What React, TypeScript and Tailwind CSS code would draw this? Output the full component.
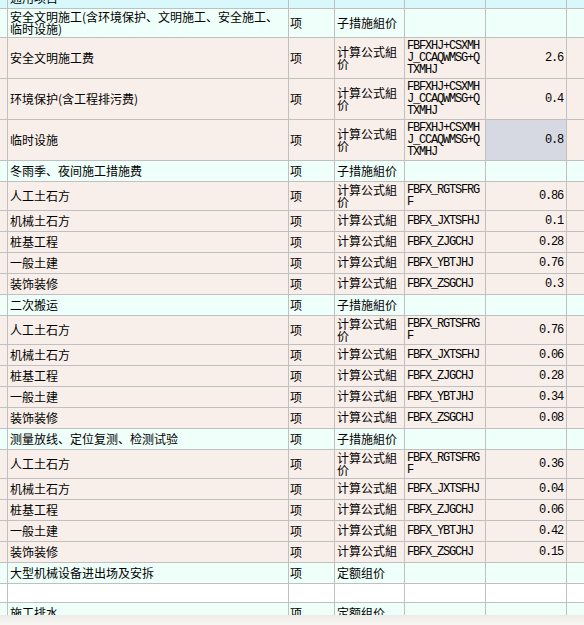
import React from "react";

type Kind = "head" | "group" | "item" | "blank";

type Row = {
  kind: Kind;
  name?: string;
  unit?: string;
  method?: string;
  formula?: string;
  value?: string;
  h: number;
  selected?: boolean;
};

const calc = "计算公式組价";

const subItems = (vals: string[]): Row[] => [
  { kind: "item", name: "人工土石方", unit: "项", method: calc, formula: "FBFX_RGTSFRGF", value: vals[0], h: 29 },
  { kind: "item", name: "机械土石方", unit: "项", method: calc, formula: "FBFX_JXTSFHJ", value: vals[1], h: 21 },
  { kind: "item", name: "桩基工程", unit: "项", method: calc, formula: "FBFX_ZJGCHJ", value: vals[2], h: 21 },
  { kind: "item", name: "一般土建", unit: "项", method: calc, formula: "FBFX_YBTJHJ", value: vals[3], h: 21 },
  { kind: "item", name: "装饰装修", unit: "项", method: calc, formula: "FBFX_ZSGCHJ", value: vals[4], h: 21 },
];

const rows: Row[] = [
  { kind: "head", name: "通用项目", h: 21 },
  { kind: "group", name: "安全文明施工(含环境保护、文明施工、安全施工、临时设施)", unit: "项", method: "子措施組价", h: 29 },
  { kind: "item", name: "安全文明施工费", unit: "项", method: calc, formula: "FBFXHJ+CSXMHJ_CCAQWMSG+QTXMHJ", value: "2.6", h: 41 },
  { kind: "item", name: "环境保护(含工程排污费)", unit: "项", method: calc, formula: "FBFXHJ+CSXMHJ_CCAQWMSG+QTXMHJ", value: "0.4", h: 41 },
  { kind: "item", name: "临时设施", unit: "项", method: calc, formula: "FBFXHJ+CSXMHJ_CCAQWMSG+QTXMHJ", value: "0.8", h: 41, selected: true },
  { kind: "group", name: "冬雨季、夜间施工措施费", unit: "项", method: "子措施組价", h: 21 },
  ...subItems(["0.86", "0.1", "0.28", "0.76", "0.3"]),
  { kind: "group", name: "二次搬运", unit: "项", method: "子措施組价", h: 21 },
  ...subItems(["0.76", "0.06", "0.28", "0.34", "0.08"]),
  { kind: "group", name: "测量放线、定位复测、检测试验", unit: "项", method: "子措施組价", h: 21 },
  ...subItems(["0.36", "0.04", "0.06", "0.42", "0.15"]),
  { kind: "group", name: "大型机械设备进出场及安拆", unit: "项", method: "定额组价", h: 21 },
  { kind: "blank", h: 19 },
  { kind: "group", name: "施工排水", unit: "项", method: "定额组价", h: 21 },
];

const rowBg: Record<Kind, string> = {
  head: "bg-[#d9f8fc]",
  group: "bg-[#effffa]",
  item: "bg-[#f9efea]",
  blank: "bg-white",
};

const cell = "border-r border-[#c0c0c0] overflow-hidden flex";
const mono = "font-['Liberation_Mono',monospace] text-[12px] tracking-[-1.2px]";

function GridRow({ row }: { row: Row }) {
  // single-height rows only have room for the first line of a wrapped method
  const clipMethod = row.h <= 21 && row.method === calc;
  return (
    <div
      className={`grid grid-cols-[8px_281px_46px_70px_81px_81px_17px] border-b border-[#c0c0c0] ${rowBg[row.kind]}`}
      style={{ height: row.h }}
    >
      <div className={cell} />
      <div className={`${cell} items-center pl-[2px] leading-[12px]`}>
        <span>{row.name}</span>
      </div>
      <div className={`${cell} items-center pl-[1px]`}>{row.unit}</div>
      <div className={`${cell} items-center pl-[2px] leading-[12px]`}>
        <span className={clipMethod ? "block h-[12px] overflow-hidden -mt-[2px]" : ""}>{row.method}</span>
      </div>
      <div className={`${cell} items-center pl-[2px] pr-[3px]`}>
        <span className={`${mono} leading-[12px] break-all`}>{row.formula}</span>
      </div>
      <div className={`${cell} items-center justify-end pr-[3px] ${row.selected ? "bg-[#d6d9e2]" : ""}`}>
        <span className={mono}>{row.value}</span>
      </div>
      <div className="overflow-hidden" />
    </div>
  );
}

export default function App() {
  return (
    <div className="w-[584px] h-[625px] overflow-hidden bg-white flex flex-col text-[12px] text-black font-['Noto_Sans_CJK_SC','Noto_Sans',sans-serif]">
      <div className="h-[615px] overflow-hidden">
        <div className="-mt-[12px]">
          {rows.map((r, i) => (
            <GridRow key={i} row={r} />
          ))}
        </div>
      </div>
      <div className="h-[10px] bg-gradient-to-b from-[#eeebe7] to-[#f7f6f3]" />
    </div>
  );
}
